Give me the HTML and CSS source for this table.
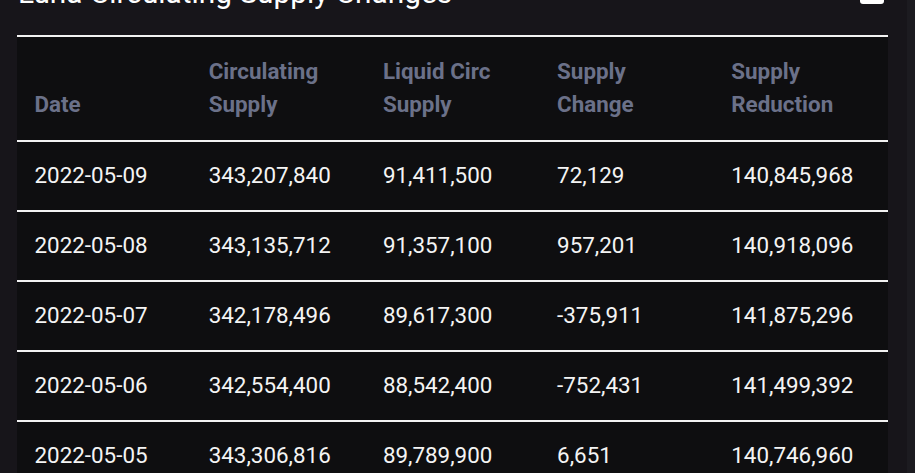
FILE: index.html
```html
<!DOCTYPE html>
<html lang="en">
<head>
<meta charset="utf-8">
<title>Luna Circulating Supply Changes</title>
<link rel="stylesheet" href="styles.css">
</head>
<body>
<section class="card">
  <header class="card-head">
    <h2 class="card-title">Luna Circulating Supply Changes</h2>
    <svg class="card-icon" width="24" height="24" viewBox="0 0 24 24" aria-hidden="true">
      <rect x="0" y="0" width="24" height="24" rx="3" fill="#ffffff"/>
    </svg>
  </header>
  <table class="supply-table">
    <thead>
      <tr>
        <th>Date</th>
        <th>Circulating<br>Supply</th>
        <th>Liquid Circ<br>Supply</th>
        <th>Supply<br>Change</th>
        <th>Supply<br>Reduction</th>
      </tr>
    </thead>
    <tbody>
      <tr><td>2022-05-09</td><td>343,207,840</td><td>91,411,500</td><td>72,129</td><td>140,845,968</td></tr>
      <tr><td>2022-05-08</td><td>343,135,712</td><td>91,357,100</td><td>957,201</td><td>140,918,096</td></tr>
      <tr><td>2022-05-07</td><td>342,178,496</td><td>89,617,300</td><td>-375,911</td><td>141,875,296</td></tr>
      <tr><td>2022-05-06</td><td>342,554,400</td><td>88,542,400</td><td>-752,431</td><td>141,499,392</td></tr>
      <tr><td>2022-05-05</td><td>343,306,816</td><td>89,789,900</td><td>6,651</td><td>140,746,960</td></tr>
    </tbody>
  </table>
</section>
</body>
</html>
```

FILE: styles.css
```css
html, body {
  margin: 0;
  padding: 0;
  height: 473px;
  overflow: hidden;
}

body {
  background: #1c1b20;
  font-family: Roboto, "Liberation Sans", Arial, sans-serif;
}

.card {
  width: 871px;
  background: #17151a;
  padding: 0 19px 40px 17px;
  height: 520px;
}

.card-head {
  display: flex;
  justify-content: space-between;
  align-items: flex-end;
  margin-top: -25px;
  padding-bottom: 25px;
  box-sizing: border-box;
  height: 60px;
}

.card-title {
  margin: 0 0 0 1px;
  font-size: 29.8px;
  font-weight: 400;
  line-height: 36px;
  color: #ffffff;
  position: relative;
  top: 1px;
}

.card-icon {
  display: block;
  margin-right: 4px;
  margin-bottom: 6px;
}

.supply-table {
  width: 871px;
  border-collapse: collapse;
  table-layout: fixed;
  background: #0e0e10;
  border-top: 2px solid #f2f2f2;
  font-size: 22.4px;
  line-height: 33px;
}

.supply-table th,
.supply-table td {
  text-align: left;
  padding: 17px 10px 18px 17.5px;
  white-space: nowrap;
}

.supply-table th {
  font-weight: 700;
  color: #6b7189;
  vertical-align: bottom;
  padding-top: 18px;
  padding-bottom: 19px;
}

.supply-table td {
  color: #f4f4f4;
  font-weight: 400;
}

.supply-table thead tr,
.supply-table tbody tr {
  border-bottom: 2px solid #f2f2f2;
}
```
